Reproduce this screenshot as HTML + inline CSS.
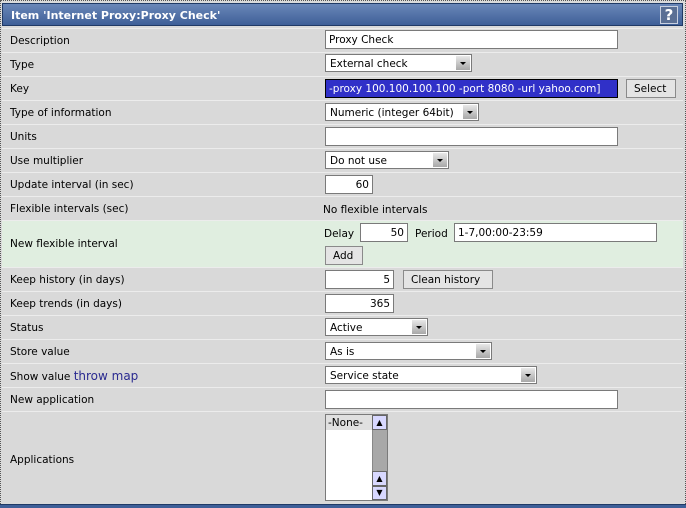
<!DOCTYPE html>
<html><head><style>
*{box-sizing:border-box;margin:0;padding:0}
body{width:686px;height:508px;background:#fff;font-family:"DejaVu Sans","Liberation Sans",sans-serif;font-size:10.5px;color:#000;position:relative;overflow:hidden}
.frame{position:absolute;left:0;top:0;width:686px;height:508px;border:1px dotted #555;background:#dadada}
.title{position:absolute;left:2px;top:3px;width:681px;height:23px;background:linear-gradient(#6a87b8,#3e5f98);border:1px solid #203a66;color:#fff;font-weight:bold;font-size:11px;padding:5px 0 0 8px}
.help{position:absolute;right:4px;top:2px;width:18px;height:18px;border:1px solid #c8d0e0;background:#5a6f94;color:#fff;font-weight:bold;font-size:15px;text-align:center;line-height:17px}
.row{position:absolute;left:2px;width:681px;background:#d9d9d9;border-top:1px solid #ececec}
.lbl{position:absolute;left:8px}
.g{background:#e0eee0}
.in{position:absolute;background:#fff;border:1px solid #7a7a7a;height:19px;padding:3px 3px 1px;white-space:nowrap;overflow:hidden}
.r{text-align:right}
.sel{position:absolute;background:#fff;border:1px solid #7a7a7a;height:18px;padding:3px 4px 1px;white-space:nowrap}
.sel::after{content:"";position:absolute;right:1px;top:1px;width:14px;height:14px;background:linear-gradient(#e8e8e8,#a8a8a8);}
.sel i{position:absolute;right:5px;top:7px;width:0;height:0;border-left:3px solid transparent;border-right:3px solid transparent;border-top:3px solid #000;z-index:2}
.btn{position:absolute;background:#e4e4e4;border:1px solid #8a8a8a;height:19px;padding:3px 7px 1px;white-space:nowrap}
.t{position:absolute}
</style></head><body>
<div class="frame"></div>
<div class="title">Item 'Internet Proxy:Proxy Check'<div class="help">?</div></div>
<div class="row" style="top:28px;height:24px"><span class="lbl" style="top:6px">Description</span></div>
<div class="row" style="top:52px;height:24px"><span class="lbl" style="top:6px">Type</span></div>
<div class="row" style="top:76px;height:24px"><span class="lbl" style="top:6px">Key</span></div>
<div class="row" style="top:100px;height:24px"><span class="lbl" style="top:6px">Type of information</span></div>
<div class="row" style="top:124px;height:24px"><span class="lbl" style="top:6px">Units</span></div>
<div class="row" style="top:148px;height:24px"><span class="lbl" style="top:6px">Use multiplier</span></div>
<div class="row" style="top:172px;height:24px"><span class="lbl" style="top:6px">Update interval (in sec)</span></div>
<div class="row" style="top:196px;height:24px"><span class="lbl" style="top:6px">Flexible intervals (sec)</span></div>
<div class="row g" style="top:220px;height:47px"><span class="lbl" style="top:17px">New flexible interval</span></div>
<div class="row" style="top:267px;height:24px"><span class="lbl" style="top:6px">Keep history (in days)</span></div>
<div class="row" style="top:291px;height:24px"><span class="lbl" style="top:6px">Keep trends (in days)</span></div>
<div class="row" style="top:315px;height:24px"><span class="lbl" style="top:6px">Status</span></div>
<div class="row" style="top:339px;height:24px"><span class="lbl" style="top:6px">Store value</span></div>
<div class="row" style="top:363px;height:24px"><span class="lbl" style="top:5px">Show value <span style="color:#2a2a90;font-size:12px">throw map</span></span></div>
<div class="row" style="top:387px;height:24px"><span class="lbl" style="top:6px">New application</span></div>
<div class="row" style="top:411px;height:93px"><span class="lbl" style="top:42px">Applications</span></div>
<div style="position:absolute;left:0;top:504px;width:686px;height:4px;background:#3e5f98;border-top:1px solid #203a66"></div>

<div class="in" style="left:325px;top:30px;width:293px">Proxy Check</div>
<div class="sel" style="left:325px;top:54px;width:147px">External check<i></i></div>
<div class="in" style="left:325px;top:79px;width:293px;background:#3030c8;color:#fff;border-color:#000;direction:rtl;text-align:left"><span style="direction:ltr;unicode-bidi:embed">-proxy 100.100.100.100 -port 8080 -url yahoo.com]</span></div>
<div class="btn" style="left:626px;top:79px;width:50px">Select</div>
<div class="sel" style="left:325px;top:103px;width:154px">Numeric (integer 64bit)<i></i></div>
<div class="in" style="left:325px;top:127px;width:293px"></div>
<div class="sel" style="left:325px;top:151px;width:124px">Do not use<i></i></div>
<div class="in r" style="left:325px;top:175px;width:48px">60</div>
<div class="t" style="left:323px;top:204px">No flexible intervals</div>
<div class="t" style="left:324px;top:228px">Delay</div>
<div class="in r" style="left:360px;top:223px;width:48px">50</div>
<div class="t" style="left:415px;top:228px">Period</div>
<div class="in" style="left:454px;top:223px;width:203px">1-7,00:00-23:59</div>
<div class="btn" style="left:325px;top:246px;width:38px">Add</div>
<div class="in r" style="left:325px;top:270px;width:69px">5</div>
<div class="btn" style="left:403px;top:270px;width:90px">Clean history</div>
<div class="in r" style="left:325px;top:294px;width:69px">365</div>
<div class="sel" style="left:325px;top:318px;width:103px">Active<i></i></div>
<div class="sel" style="left:325px;top:342px;width:167px">As is<i></i></div>
<div class="sel" style="left:325px;top:366px;width:212px">Service state<i></i></div>
<div class="in" style="left:325px;top:390px;width:293px"></div>
<div style="position:absolute;left:325px;top:414px;width:63px;height:87px;background:#fff;border:1px solid #7a7a7a">
 <div style="position:absolute;left:0;top:0;width:46px;height:15px;background:#e0e0e0;padding:2px 2px 0">-None-</div>
 <div style="position:absolute;right:0;top:0;width:15px;height:85px;background:#a8a8a8;border-left:1px solid #888"></div>
 <div style="position:absolute;right:0;top:0;width:15px;height:15px;background:#d8d8ff;border:1px solid #666;font-size:8px;text-align:center;line-height:13px">▲</div>
 <div style="position:absolute;right:0;top:56px;width:15px;height:15px;background:#d8d8ff;border:1px solid #666;font-size:8px;text-align:center;line-height:13px">▲</div>
 <div style="position:absolute;right:0;top:71px;width:15px;height:14px;background:#d8d8ff;border:1px solid #666;font-size:8px;text-align:center;line-height:12px">▼</div>
</div>
</body></html>
